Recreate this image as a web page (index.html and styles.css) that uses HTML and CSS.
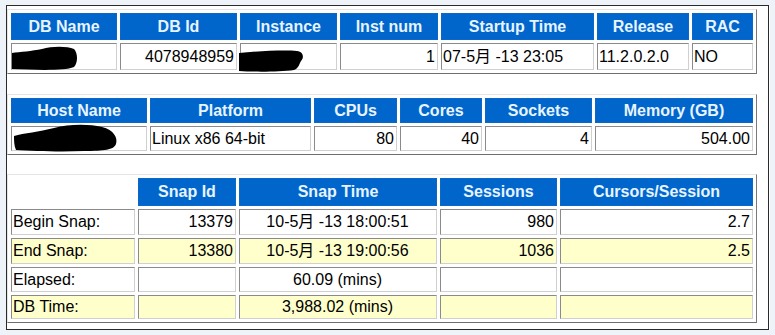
FILE: index.html
```html
<!DOCTYPE html>
<html lang="zh">
<head>
    <meta charset="UTF-8">
    <title>AWR Report Summary</title>
    <link rel="stylesheet" href="styles.css">
</head>
<body>
    <div class="report">
        <!-- database / instance -->
        <table class="awr db-info">
            <tr class="head">
                <th>DB Name</th>
                <th>DB Id</th>
                <th>Instance</th>
                <th>Inst num</th>
                <th>Startup Time</th>
                <th>Release</th>
                <th>RAC</th>
            </tr>
            <tr class="row">
                <td class="masked">
                    <svg class="blot blot-db" width="66" height="26" viewBox="0 0 66 26">
                        <path d="M0 8 C8 7 20 6 30 4 C40 1 55 1 62 4 C66 8 66 18 62 22 C52 26 25 25 0 24 Z"/>
                    </svg>
                </td>
                <td class="num">4078948959</td>
                <td class="masked">
                    <svg class="blot blot-inst" width="66" height="26" viewBox="0 0 66 26">
                        <path d="M0 6 C20 4 45 3 58 4 C65 5 65 11 62 14 C60 17 60 21 55 23 C40 25 15 25 0 24 Z"/>
                    </svg>
                </td>
                <td class="num">1</td>
                <td>07-5月 -13 23:05</td>
                <td>11.2.0.2.0</td>
                <td>NO</td>
            </tr>
        </table>

        <!-- host -->
        <table class="awr host-info">
            <tr class="head">
                <th>Host Name</th>
                <th>Platform</th>
                <th>CPUs</th>
                <th>Cores</th>
                <th>Sockets</th>
                <th>Memory (GB)</th>
            </tr>
            <tr class="row">
                <td class="masked">
                    <svg class="blot blot-host" width="104" height="28" viewBox="0 0 104 28">
                        <path d="M0 12 C10 9 25 8 40 4 C55 0 75 0 88 3 C100 6 104 14 102 20 C100 26 90 27 70 27 C45 28 20 27 2 26 C0 22 0 16 0 12 Z"/>
                    </svg>
                </td>
                <td>Linux x86 64-bit</td>
                <td class="num">80</td>
                <td class="num">40</td>
                <td class="num">4</td>
                <td class="num">504.00</td>
            </tr>
        </table>

        <!-- snapshots -->
        <table class="awr snap-info">
            <tr class="head">
                <th class="blank"></th>
                <th>Snap Id</th>
                <th>Snap Time</th>
                <th>Sessions</th>
                <th>Cursors/Session</th>
            </tr>
            <tr class="row r1">
                <td>Begin Snap:</td>
                <td class="num">13379</td>
                <td class="mid">10-5月 -13 18:00:51</td>
                <td class="num">980</td>
                <td class="num">2.7</td>
            </tr>
            <tr class="row r2 alt">
                <td>End Snap:</td>
                <td class="num">13380</td>
                <td class="mid">10-5月 -13 19:00:56</td>
                <td class="num">1036</td>
                <td class="num">2.5</td>
            </tr>
            <tr class="row r3">
                <td>Elapsed:</td>
                <td></td>
                <td class="mid">60.09 (mins)</td>
                <td></td>
                <td></td>
            </tr>
            <tr class="row r4 alt">
                <td>DB Time:</td>
                <td></td>
                <td class="mid">3,988.02 (mins)</td>
                <td></td>
                <td></td>
            </tr>
        </table>
    </div>
</body>
</html>
```

FILE: styles.css
```css
* {
    box-sizing: border-box;
}

body {
    margin: 0;
    background: #eef2f9;
    font-family: "Liberation Sans", Arial, "Noto Sans CJK SC", sans-serif;
    font-size: 16px;
    color: #000;
}

.report {
    margin: 5px 0 0 6px;
    width: 763px;
    height: 325px;
    background: #fff;
    border: 1px solid #2a2a2a;
    box-shadow: 1px 1px 0 #fff;
    padding-top: 3px;
}

/* classic border="1" look: outset table, inset cells */
.awr {
    width: 750px;
    table-layout: fixed;
    border-collapse: separate;
    border-spacing: 3px;
    border: 1px solid;
    border-color: #e4e4e4 #7a7a7a #6e6e6e #e4e4e4;
    margin-bottom: 20px;
}

.awr th {
    background: #0066cc;
    color: #e8f4ff;
    font-weight: bold;
    text-align: center;
    padding: 0 2px;
    border: 1px solid #0a68c8;
    white-space: nowrap;
    line-height: 18px;
}

.awr th.blank {
    background: none;
    border: none;
}

.awr td {
    background: #fff;
    padding: 0 2px 0 1px;
    border: 1px solid;
    border-color: #8a8a8a #d0d0d0 #d0d0d0 #8a8a8a;
    white-space: nowrap;
    vertical-align: middle;
    line-height: 18px;
}

.awr .alt td {
    background: #ffffcc;
}

.awr td.num {
    text-align: right;
}

.awr td.mid {
    text-align: center;
}

/* scribbled-out names */
.awr td.masked {
    position: relative;
}

.blot {
    position: absolute;
    fill: #000;
}

.blot-db {
    left: 0;
    top: 1px;
}

.blot-inst {
    left: -2px;
    top: 3px;
}

.blot-host {
    left: 2px;
    top: -3px;
}

/* column widths */
.db-info th:nth-child(1) { width: 106px; }
.db-info th:nth-child(2) { width: 117px; }
.db-info th:nth-child(3) { width: 97px; }
.db-info th:nth-child(4) { width: 98px; }
.db-info th:nth-child(5) { width: 153px; }
.db-info th:nth-child(6) { width: 92px; }
.db-info th:nth-child(7) { width: 61px; }

.host-info th:nth-child(1) { width: 136px; }
.host-info th:nth-child(2) { width: 161px; }
.host-info th:nth-child(3) { width: 83px; }
.host-info th:nth-child(4) { width: 82px; }
.host-info th:nth-child(5) { width: 107px; }
.host-info th:nth-child(6) { width: 158px; }

.snap-info th:nth-child(1) { width: 124px; }
.snap-info th:nth-child(2) { width: 98px; }
.snap-info th:nth-child(3) { width: 198px; }
.snap-info th:nth-child(4) { width: 117px; }
.snap-info th:nth-child(5) { width: 193px; }

/* row heights */
.db-info .head th { height: 27px; }
.db-info .row td { height: 27px; }

.host-info {
    margin-bottom: 19px;
}

.host-info .head th { height: 25px; }
.host-info .row td { height: 25px; }

.snap-info .head th { height: 28px; }
.snap-info .r1 td { height: 26px; }
.snap-info .r2 td { height: 26px; }
.snap-info .r3 td { height: 25px; }
.snap-info .r4 td { height: 24px; }

.snap-info {
    margin-bottom: 0;
}
```
